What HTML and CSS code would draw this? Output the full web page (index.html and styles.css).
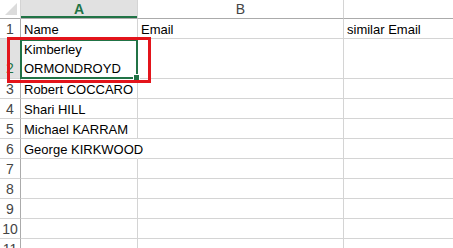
FILE: index.html
```html
<!DOCTYPE html>
<html lang="en">
<head>
    <meta charset="UTF-8">
    <title>Sheet1</title>
    <link rel="stylesheet" href="styles.css">
</head>
<body>
    <div class="sheet">
        <div class="grid">
            <!-- column headers -->
            <div class="corner"><span class="tri"></span></div>
            <div class="colhead active">A</div>
            <div class="colhead">B</div>
            <div class="colhead last"></div>

            <div class="rowhead">1</div>
            <div class="cell">Name</div>
            <div class="cell">Email</div>
            <div class="cell last">similar Email</div>

            <div class="rowhead active tall">2</div>
            <div class="cell tall selected">Kimberley<br>ORMONDROYD<span class="handle"></span></div>
            <div class="cell tall"></div>
            <div class="cell tall last"></div>

            <div class="rowhead">3</div>
            <div class="cell">Robert COCCARO</div>
            <div class="cell"></div>
            <div class="cell last"></div>

            <div class="rowhead">4</div>
            <div class="cell">Shari HILL</div>
            <div class="cell"></div>
            <div class="cell last"></div>

            <div class="rowhead">5</div>
            <div class="cell">Michael KARRAM</div>
            <div class="cell"></div>
            <div class="cell last"></div>

            <div class="rowhead">6</div>
            <div class="cell spill">George KIRKWOOD</div>
            <div class="cell"></div>
            <div class="cell last"></div>

            <div class="rowhead">7</div>
            <div class="cell"></div>
            <div class="cell"></div>
            <div class="cell last"></div>

            <div class="rowhead">8</div>
            <div class="cell"></div>
            <div class="cell"></div>
            <div class="cell last"></div>

            <div class="rowhead">9</div>
            <div class="cell"></div>
            <div class="cell"></div>
            <div class="cell last"></div>

            <div class="rowhead">10</div>
            <div class="cell"></div>
            <div class="cell"></div>
            <div class="cell last"></div>

            <div class="rowhead">11</div>
            <div class="cell"></div>
            <div class="cell"></div>
            <div class="cell last"></div>
        </div>

        <!-- red annotation box -->
        <div class="callout"></div>
    </div>
</body>
</html>
```

FILE: styles.css
```css
body {
    margin: 0;
    background: #ffffff;
    font-family: "Liberation Sans", Arial, sans-serif;
    color: #000000;
    overflow: hidden;
}
.sheet {
    position: relative;
    width: 453px;
    height: 248px;
    overflow: hidden;
}
.grid {
    display: grid;
    grid-template-columns: 21px 117px 206px 110px;
    grid-template-rows: 19px 20px 40px repeat(9, 20px);
}
.grid > div {
    box-sizing: border-box;
}

/* headers */
.corner {
    position: relative;
    border-right: 1px solid #d4d4d4;
    border-bottom: 1px solid #ababab;
}
.corner .tri {
    position: absolute;
    right: 3px;
    bottom: 3px;
    width: 0;
    height: 0;
    border-left: 12px solid transparent;
    border-bottom: 12px solid #dcdcdc;
}
.colhead {
    font-size: 14px;
    line-height: 18px;
    text-align: center;
    color: #444444;
    border-right: 1px solid #d4d4d4;
    border-bottom: 1px solid #ababab;
}
.colhead.active {
    background: #e1e1e1;
    color: #217346;
    font-weight: bold;
    box-shadow: inset 0 -2px 0 #217346;
}
.rowhead {
    font-size: 14px;
    line-height: 20px;
    text-align: center;
    color: #444444;
    border-right: 1px solid #ababab;
    border-bottom: 1px solid #d4d4d4;
}
.rowhead.tall {
    display: flex;
    align-items: flex-end;
    justify-content: center;
    line-height: 19px;
}
.rowhead.active {
    background: #e1e1e1;
    color: #217346;
}

/* cells */
.cell {
    font-size: 13px;
    line-height: 19px;
    padding: 1px 0 0 3px;
    white-space: nowrap;
    border-right: 1px solid #d4d4d4;
    border-bottom: 1px solid #d4d4d4;
}
.cell.last {
    border-right: none;
}
.cell.spill {
    border-right-color: transparent;
    overflow: visible;
    position: relative;
    z-index: 1;
}
.cell.tall {
    display: flex;
    flex-direction: column;
    justify-content: flex-end;
}
.cell.selected {
    display: block;
    position: relative;
    padding-top: 1px;
    line-height: 19px;
    outline: 2px solid #217346;
    outline-offset: -2px;
    margin-left: -1px;
    padding-left: 4px;
}
.handle {
    position: absolute;
    right: -3px;
    bottom: -3px;
    width: 5px;
    height: 5px;
    background: #217346;
    border: 1px solid #ffffff;
}

/* annotation */
.callout {
    position: absolute;
    left: 7px;
    top: 37px;
    width: 144px;
    height: 46px;
    box-sizing: border-box;
    border: 3px solid #e3141b;
}
```
